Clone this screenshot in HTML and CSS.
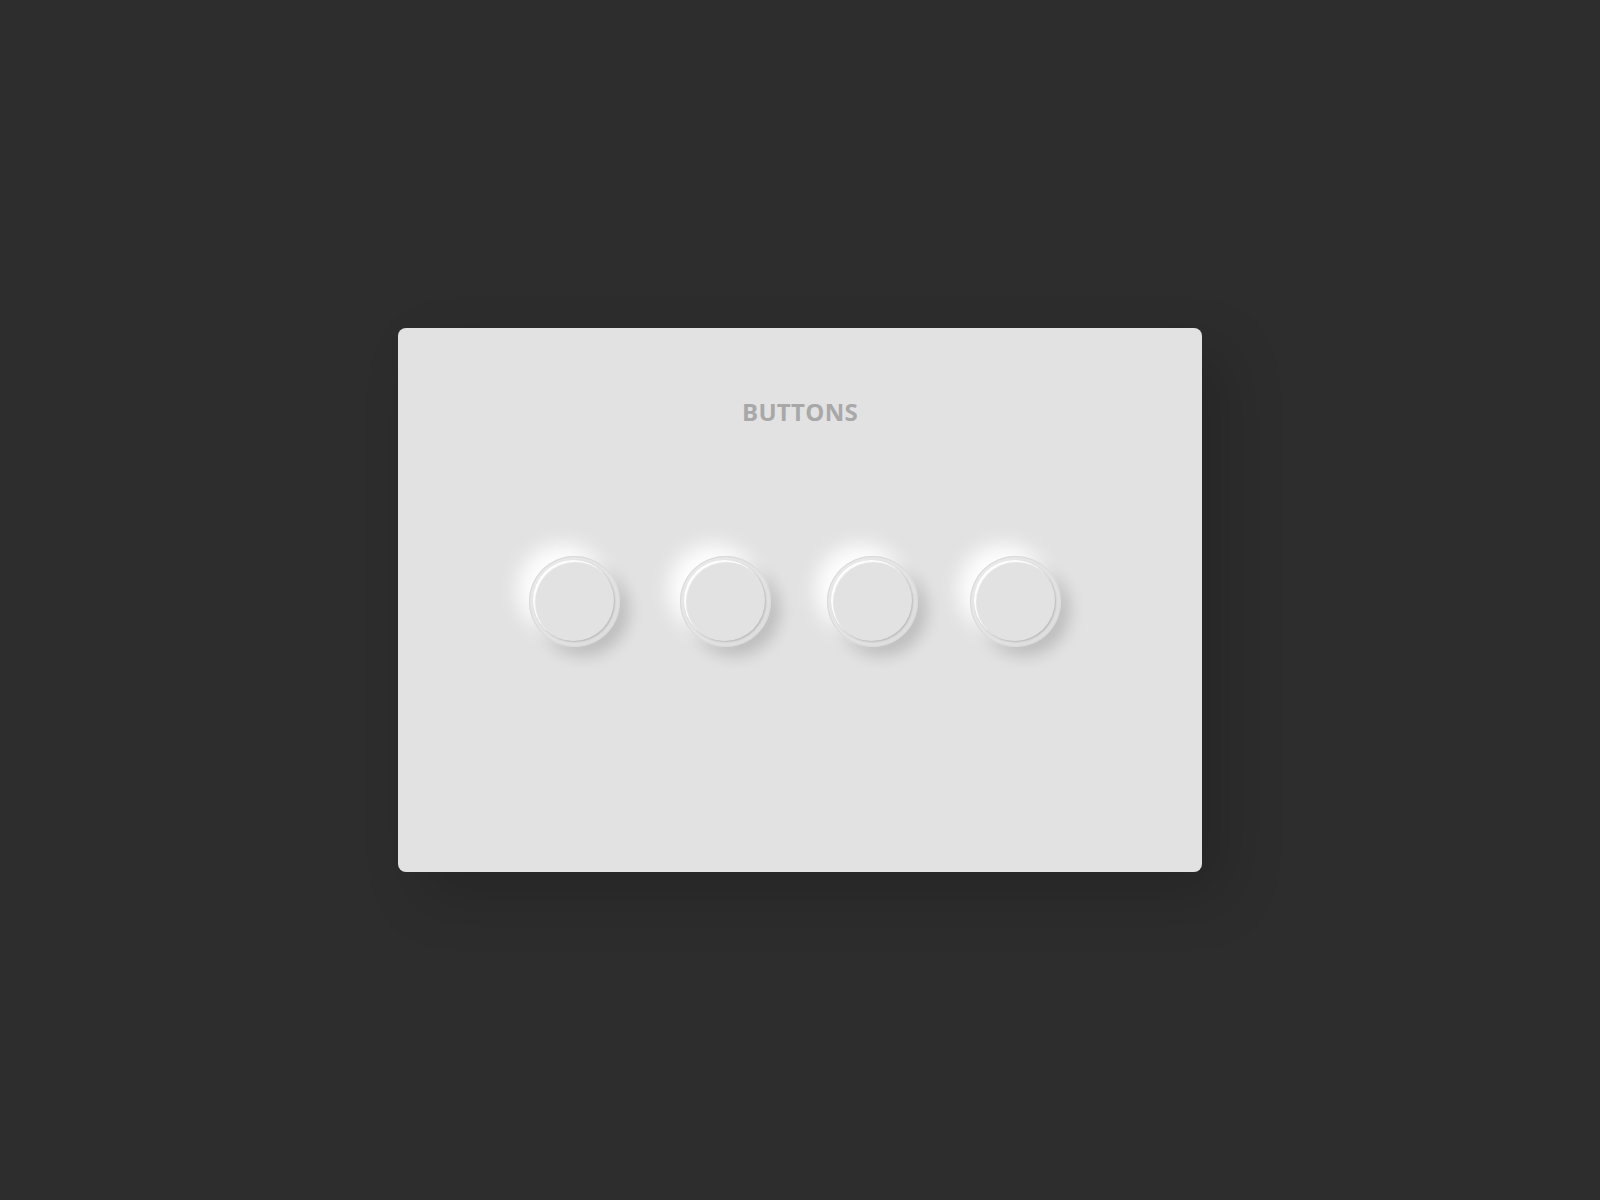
FILE: index.html
```html
<!DOCTYPE html>
<html lang="en">
<head>
    <title>Buttons</title>
    <link rel="stylesheet" href="styles.css">
</head>
<body>
    <div class="panel">
        <h1 class="panel-title">BUTTONS</h1>
        <div class="knobs">
            <button class="knob"><span class="knob-face"></span></button>
            <button class="knob"><span class="knob-face"></span></button>
            <button class="knob"><span class="knob-face"></span></button>
            <button class="knob"><span class="knob-face"></span></button>
        </div>
    </div>
</body>
</html>
```

FILE: styles.css
```css
body {
    margin: 0;
    min-height: 100vh;
    background-color: #2d2d2d;
    display: flex;
    align-items: center;
    justify-content: center;
    font-family: "Open Sans", "DejaVu Sans", sans-serif;
}
.panel {
    width: 804px;
    height: 544px;
    box-sizing: border-box;
    padding-top: 68px;
    background-color: #e2e2e2;
    border-radius: 8px;
    box-shadow: 24px 24px 60px rgba(0, 0, 0, 0.16);
    display: flex;
    flex-direction: column;
    align-items: center;
}
.panel-title {
    margin: 0;
    font-size: 24px;
    line-height: 32px;
    font-weight: 700;
    letter-spacing: 0.3px;
    color: #a8a8a8;
}
.knobs {
    display: flex;
    margin-top: 128px;
    margin-right: 10px;
}
.knob + .knob {
    margin-left: 56px;
}
.knob:nth-child(2) {
    margin-left: 60px;
}
.knob:nth-child(4) {
    margin-left: 52px;
}
.knob {
    width: 91px;
    height: 91px;
    padding: 0;
    border: 1px solid #d9d9d9;
    border-radius: 50%;
    background: linear-gradient(135deg, #ebebeb, #dcdcdc);
    box-shadow: -12px -12px 20px rgba(255, 255, 255, 0.95),
                9px 9px 15px rgba(0, 0, 0, 0.16);
    display: flex;
    align-items: center;
    justify-content: center;
    cursor: pointer;
}
.knob-face {
    width: 81px;
    height: 81px;
    margin: -3px 0 0 -3px;
    border-radius: 50%;
    background-color: #e2e2e2;
    box-shadow: inset 2px 2px 1px rgba(255, 255, 255, 0.95),
                1px 1px 2px rgba(0, 0, 0, 0.18);
}
```
